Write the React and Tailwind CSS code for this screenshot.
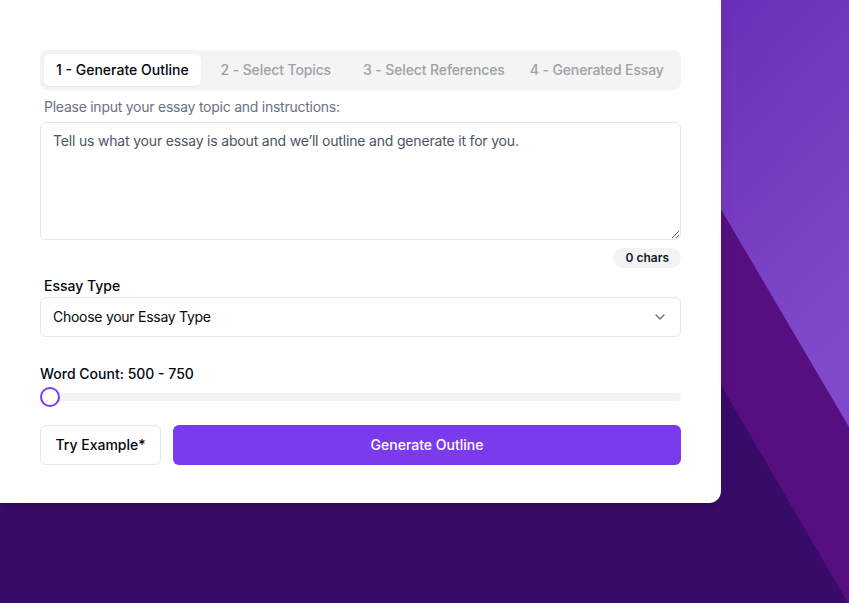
import { ChevronDown } from 'lucide-react'

const tabs = [
  { id: 1, label: '1 - Generate Outline' },
  { id: 2, label: '2 - Select Topics' },
  { id: 3, label: '3 - Select References' },
  { id: 4, label: '4 - Generated Essay' },
]

function Backdrop() {
  return (
    <svg
      className="absolute inset-0"
      width="849"
      height="603"
      viewBox="0 0 849 603"
      aria-hidden="true"
    >
      <defs>
        <linearGradient id="light" x1="0" y1="0" x2="0.6" y2="1">
          <stop offset="0" stopColor="#6428b3" />
          <stop offset="1" stopColor="#8049cc" />
        </linearGradient>
      </defs>
      <rect width="849" height="603" fill="#390b68" />
      <polygon points="497,0 849,0 849,603 848,603" fill="#560f80" />
      <polygon points="598,0 849,0 849,427" fill="url(#light)" />
    </svg>
  )
}

export default function App() {
  return (
    <div
      className="relative w-[849px] h-[603px] overflow-hidden"
      style={{ fontFamily: 'Inter, "Noto Sans", sans-serif' }}
    >
      <Backdrop />

      {/* Card */}
      <div className="relative w-[721px] h-[503px] bg-white rounded-br-xl shadow-lg px-10 pt-[50px]">
        {/* Steps */}
        <div className="h-10 bg-gray-100 rounded-lg p-1 flex gap-2 overflow-hidden">
          {tabs.map((tab) => {
            const active = tab.id === 1
            return (
              <div
                key={tab.id}
                className={`h-8 px-3 shrink-0 whitespace-nowrap flex items-center rounded-md text-sm font-medium ${
                  active ? 'bg-white text-gray-950 shadow-xs' : 'text-neutral-400 tracking-[-0.12px]'
                } ${tab.id === 4 ? '-ml-[7px]' : ''}`}
              >
                {tab.label}
              </div>
            )
          })}
        </div>

        {/* Topic */}
        <p className="mt-[7px] px-1 h-5 leading-5 text-sm tracking-[-0.25px] text-gray-500">
          Please input your essay topic and instructions:
        </p>
        <textarea
          className="mt-[5px] block w-full h-[118px] border border-gray-200 rounded-md px-3 py-2 text-sm tracking-[-0.18px] text-gray-900 placeholder:text-gray-600 outline-none"
          placeholder="Tell us what your essay is about and we’ll outline and generate it for you."
        />
        <div className="mt-2 flex justify-end">
          <span className="h-5 px-3 flex items-center rounded-full bg-gray-100 text-xs font-semibold text-gray-900">
            0 chars
          </span>
        </div>

        {/* Essay type */}
        <p className="mt-2 px-1 h-5 leading-5 text-sm font-medium text-gray-950">Essay Type</p>
        <div className="mt-px h-10 border border-gray-200 rounded-md px-3 flex items-center justify-between text-sm text-gray-950">
          <span className="tracking-[-0.27px]">Choose your Essay Type</span>
          <ChevronDown size={16} className="text-gray-500" />
        </div>

        {/* Word count */}
        <p className="mt-[27px] h-5 leading-5 text-sm font-medium text-gray-950">
          Word Count: 500 - 750
        </p>
        <div className="mt-[3px] h-5 flex items-center relative">
          <div className="w-full h-2 rounded-full bg-gray-100" />
          <div className="absolute left-0 top-0 w-5 h-5 rounded-full border-2 border-[#7c3aed] bg-white" />
        </div>

        {/* Actions */}
        <div className="mt-[18px] flex gap-3">
          <button className="h-10 w-[121px] border border-gray-200 rounded-md text-sm font-medium text-gray-950 bg-white">
            Try Example*
          </button>
          <button className="h-10 flex-1 rounded-md bg-[#7c3aed] text-sm font-medium text-white">
            Generate Outline
          </button>
        </div>
      </div>
    </div>
  )
}
